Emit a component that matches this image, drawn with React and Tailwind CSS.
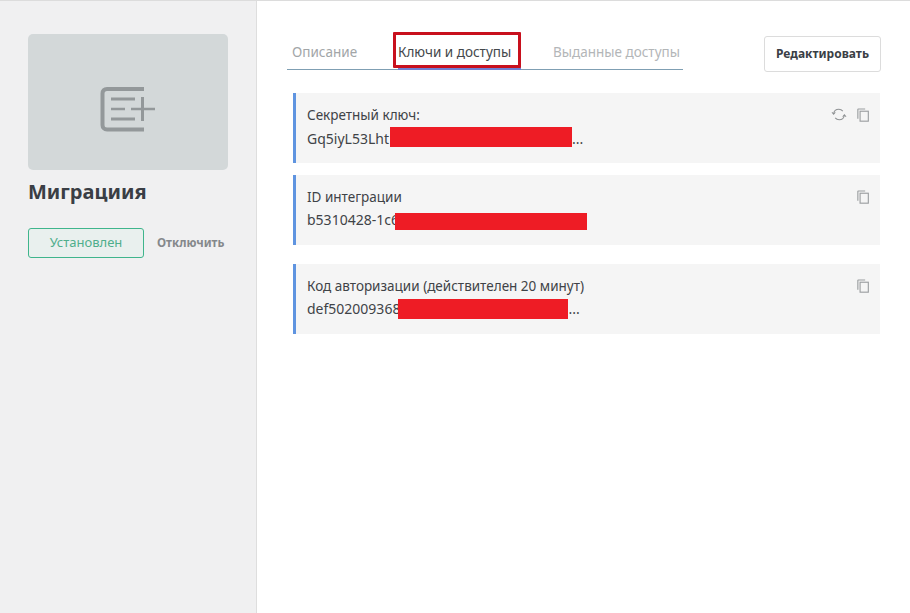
import { useState } from "react";

//Copy icon, two sheets
const CopyIcon = () => (
  <svg width="12" height="14" viewBox="0 0 14 16" fill="none" stroke="#9a9d9f" strokeWidth="1.3">
    <path d="M1 12.5V1.6C1 1.2 1.2 1 1.6 1H9.5" />
    <rect x="3.6" y="3.6" width="9.6" height="11.6" />
  </svg>
);

//Refresh icon
const RefreshIcon = () => (
  <svg width="16" height="13" viewBox="0 0 16 14" fill="none" stroke="#8f9294" strokeWidth="1.1">
    <path d="M2.2 6.2C2.6 3.3 5 1.3 7.8 1.3c1.8 0 3.3.8 4.3 2" />
    <path d="M13.8 7.8c-.4 2.9-2.8 4.9-5.6 4.9-1.8 0-3.3-.8-4.3-2" />
    <path d="M0.4 4.6 2.2 6.6 4 4.6" />
    <path d="M12 9.4 13.8 7.4 15.6 9.4" />
  </svg>
);

//Placeholder picture of the widget
const MigrationIcon = () => (
  <svg width="56" height="46" viewBox="0 0 56 46" fill="none" stroke="#93989a">
    <path d="M44 2H7C4.2 2 2.5 3.8 2.5 6.5V38C2.5 40.6 4.2 42.5 7 42.5H44" strokeWidth="4" />
    <path d="M11 12H35M11 32H35" strokeWidth="3" />
    <path d="M11 22H25M31 22H55" strokeWidth="2.6" />
    <path d="M42.5 10V34" strokeWidth="3" />
  </svg>
);

const Card = ({ label, start, redMargin = 0, redWidth, redHeight = 20, redShift = -2, dots, refresh, className }) => (
  <div className={`flex w-[587px] justify-between h-[70px] bg-[#f5f5f5] border-l-[3px] border-[#5f94e0] pl-[11px] pr-[11px] pt-[12px] ${className}`}>
    <div className="text-[13.5px] leading-[21px] text-[#3f4347]">
      <div>{label}</div>
      <div className="mt-[1px] flex items-center whitespace-nowrap text-[14px]">
        {start}
        {/* red bar that hides the secret in the screenshot */}
        <span
          className="bg-[#ee1c25]"
          style={{ width: redWidth, height: redHeight, marginLeft: redMargin, marginTop: redShift > 0 ? redShift : 0, marginBottom: redShift < 0 ? -redShift : 0 }}
        />
        {dots && <span>...</span>}
      </div>
    </div>
    <div className="flex items-start gap-[10px] pt-[3px]">
      {refresh && <RefreshIcon />}
      <CopyIcon />
    </div>
  </div>
);

export default function App() {
  const [tab] = useState("keys");

  return (
    <div className="flex h-[613px] w-[910px] overflow-hidden border-t border-[#dcdcdc] bg-white font-['Noto_Sans',sans-serif]">
      {/* Sidebar */}
      <aside className="h-full w-[257px] shrink-0 border-r border-[#dedede] bg-[#f0f0f1] pl-[28px] pt-[33px]">
        <div className="flex h-[136px] w-[200px] items-center justify-center rounded-[5px] bg-[#d3d8d9] pt-[16px]">
          <MigrationIcon />
        </div>
        <h1 className="mt-[7px] text-[20px] font-bold leading-[30px] text-[#3a3e45]">Миграциия</h1>
        <div className="mt-[21px] flex items-center">
          <span className="flex h-[30px] w-[116px] items-center justify-center rounded-[3px] border border-[#3fb58c] bg-[#e9f0ee] text-[13px] text-[#4fae8c]">
            Установлен
          </span>
          <span className="ml-[13px] text-[11.7px] font-bold text-[#85888b]">Отключить</span>
        </div>
      </aside>

      {/* Main */}
      <main className="flex-1 pl-[36px] pr-[29px]">
        <div className="ml-[-6px] flex items-start justify-between pt-[35px]">
          <div className="flex h-[34px] w-[396px] border-b border-[#7f9fb3] pl-[5px] text-[13.5px] leading-[32px] whitespace-nowrap">
            <span className="w-[106px] text-[#a2a6a8]">Описание</span>
            <span className={`relative h-[34px] w-[123px] border-b-[3px] ${tab === "keys" ? "border-[#6f80d2] text-[#44484b]" : ""}`}>
              Ключи и доступы
              <span className="absolute left-[-5px] top-[-4px] h-[36px] w-[128px] rounded-[1px] border-[3px] border-[#c8101d]" />
            </span>
            <span className="ml-[32px] text-[#b3b6b8]">Выданные доступы</span>
          </div>
          <button className="h-[36px] w-[117px] rounded-[3px] border border-[#dcdcdc] bg-white text-[12px] font-bold text-[#3a3e45]">
            Редактировать
          </button>
        </div>

        <Card className="mt-[21px]" label="Секретный ключ:" start="Gq5iyL53Lht" redMargin={1} redWidth={182} dots refresh />
        <Card className="mt-[12px]" label="ID интеграции" start="b5310428-1c6" redMargin={-4} redWidth={192} redHeight={17} redShift={4} />
        <Card className="mt-[19px]" label="Код авторизации (действителен 20 минут)" start="def502009368" redMargin={-2} redWidth={170} redShift={0} dots />
      </main>
    </div>
  );
}
